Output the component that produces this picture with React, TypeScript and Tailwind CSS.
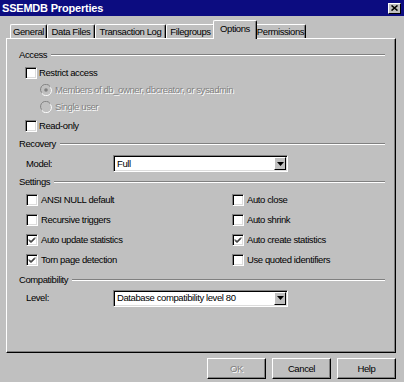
import React from "react";

function Check({ checked = false }: { checked?: boolean }) {
  return (
    <span className="w-[12px] h-[12px] shrink-0 bg-white border border-t-[#808080] border-l-[#808080] border-b-white border-r-white shadow-[inset_1px_1px_0_#000,inset_-1px_-1px_0_#dcdcdc] flex items-center justify-center">
      {checked && (
        <svg width="8" height="8" viewBox="0 0 8 8">
          <path d="M1 3.5 L3 5.5 L7 1.5 M1 4.5 L3 6.5 L7 2.5" stroke="#000" strokeWidth="1" fill="none" />
        </svg>
      )}
    </span>
  );
}

function Radio({ selected = false }: { selected?: boolean }) {
  return (
    <svg width="12" height="12" viewBox="0 0 12 12" className="shrink-0">
      <circle cx="6" cy="6" r="5.5" fill="#c0c0c0" />
      <path d="M10 2.5 A5 5 0 0 0 1.5 8.5" stroke="#808080" strokeWidth="1" fill="none" />
      <path d="M2 9.5 A5 5 0 0 0 10.5 3.5" stroke="#fff" strokeWidth="1" fill="none" />
      {selected && <circle cx="6" cy="6" r="1.8" fill="#808080" />}
    </svg>
  );
}

function Header({ label, h }: { label: string; h: string }) {
  return (
    <div className={`flex items-center ${h}`}>
      <span>{label}</span>
      <div className="flex-1 ml-[4px] h-[2px] border-t border-t-[#808080] border-b border-b-white" />
    </div>
  );
}

function Option({ label, checked = false }: { label: string; checked?: boolean }) {
  return (
    <div className="flex items-center gap-[3px] h-[20px]">
      <Check checked={checked} />
      <span>{label}</span>
    </div>
  );
}

function Select({ value }: { value: string }) {
  return (
    <div className="w-[175px] h-[17px] bg-white border border-t-[#808080] border-l-[#808080] border-b-white border-r-white shadow-[inset_1px_1px_0_#000,inset_-1px_-1px_0_#dcdcdc] flex items-center pl-[3px] pr-[1px]">
      <span className="flex-1">{value}</span>
      <span className="w-[12px] h-[13px] bg-[#c0c0c0] border border-t-white border-l-white border-b-black border-r-black flex items-center justify-center">
        <svg width="7" height="4" viewBox="0 0 7 4">
          <path d="M0 0 H7 L3.5 4 Z" fill="#000" />
        </svg>
      </span>
    </div>
  );
}

function Tab({ label, w, active = false }: { label: string; w: string; active?: boolean }) {
  if (active) {
    return (
      <div className={`${w} h-[19px] -mb-[1px] mx-[-2px] relative z-10 bg-[#c0c0c0] border-t border-l border-t-white border-l-white rounded-tl-[2px] rounded-tr-[2px] border-r border-r-black shadow-[inset_-1px_0_0_#808080] flex items-start justify-center pt-[3px]`}>
        {label}
      </div>
    );
  }
  return (
    <div className={`${w} h-[14px] bg-[#c0c0c0] border-t border-l border-t-white border-l-white rounded-tl-[2px] rounded-tr-[2px] border-r border-r-black shadow-[inset_-1px_0_0_#808080] flex items-center justify-center`}>
      {label}
    </div>
  );
}

function Button({ label, disabled = false }: { label: string; disabled?: boolean }) {
  return (
    <div className="w-[59px] h-[21px] bg-[#c0c0c0] border border-t-white border-l-white border-b-black border-r-black shadow-[inset_-1px_-1px_0_#808080] flex items-center justify-center">
      <span className={disabled ? "text-[#808080] [text-shadow:1px_1px_0_#fff]" : ""}>{label}</span>
    </div>
  );
}

export default function App() {
  return (
    <div className="w-[404px] h-[382px] bg-[#c0c0c0] text-black text-[9.5px] tracking-[-0.4px] leading-none font-['Liberation_Sans',Arial,sans-serif] overflow-hidden flex flex-col">
      <div className="h-[16px] bg-[#0c0c80] flex items-center justify-between pl-[2px] pr-[3px]">
        <span className="text-white font-bold text-[11px] tracking-[-0.2px]">SSEMDB Properties</span>
        <span className="w-[13px] h-[11px] bg-[#c0c0c0] border border-t-white border-l-white border-b-black border-r-black flex items-center justify-center">
          <svg width="7" height="6" viewBox="0 0 7 6">
            <path d="M0.5 0.5 L6.5 5.5 M6.5 0.5 L0.5 5.5" stroke="#000" strokeWidth="1.6" />
          </svg>
        </span>
      </div>

      <div className="pl-[6px] pr-[8px] pt-[4px] flex flex-col">
        <div className="h-[18px] flex items-end pl-[4px]">
          <Tab label="General" w="w-[37px]" />
          <Tab label="Data Files" w="w-[48px]" />
          <Tab label="Transaction Log" w="w-[71px]" />
          <Tab label="Filegroups" w="w-[49px]" />
          <Tab label="Options" w="w-[44px]" active />
          <Tab label="Permissions" w="w-[51px]" />
        </div>

        <div className="h-[315px] border border-t-white border-l-white border-b-black border-r-black shadow-[inset_-1px_-1px_0_#808080] pl-[12px] pr-[10px] pt-[8px] flex flex-col">
          <Header label="Access" h="h-[16px]" />
          <div className="h-[19px] flex items-center gap-[2px] pl-[6px]">
            <Check />
            <span>Restrict access</span>
          </div>
          <div className="h-[16px] flex items-center gap-[3px] pl-[21px] text-[#808080] [text-shadow:1px_1px_0_#fff]">
            <Radio selected />
            <span>Members of db_owner, dbcreator, or sysadmin</span>
          </div>
          <div className="h-[18px] flex items-center gap-[3px] pl-[21px] text-[#808080] [text-shadow:1px_1px_0_#fff]">
            <Radio />
            <span>Single user</span>
          </div>
          <div className="h-[19px] flex items-center gap-[2px] pl-[6px]">
            <Check />
            <span>Read-only</span>
          </div>

          <Header label="Recovery" h="h-[18px]" />
          <div className="h-[21px] flex items-center pl-[7px]">
            <span className="w-[87px]">Model:</span>
            <Select value="Full" />
          </div>

          <Header label="Settings" h="h-[16px]" />
          <div className="flex pl-[7px]">
            <div className="w-[206px] flex flex-col">
              <Option label="ANSI NULL default" />
              <Option label="Recursive triggers" />
              <Option label="Auto update statistics" checked />
              <Option label="Torn page detection" checked />
            </div>
            <div className="flex flex-col">
              <Option label="Auto close" />
              <Option label="Auto shrink" />
              <Option label="Auto create statistics" checked />
              <Option label="Use quoted identifiers" />
            </div>
          </div>

          <Header label="Compatibility" h="h-[19px]" />
          <div className="h-[18px] flex items-center pl-[7px]">
            <span className="w-[87px]">Level:</span>
            <Select value="Database compatibility level 80" />
          </div>
        </div>

        <div className="mt-[5px] flex justify-end gap-[6px]">
          <Button label="OK" disabled />
          <Button label="Cancel" />
          <Button label="Help" />
        </div>
      </div>
    </div>
  );
}
